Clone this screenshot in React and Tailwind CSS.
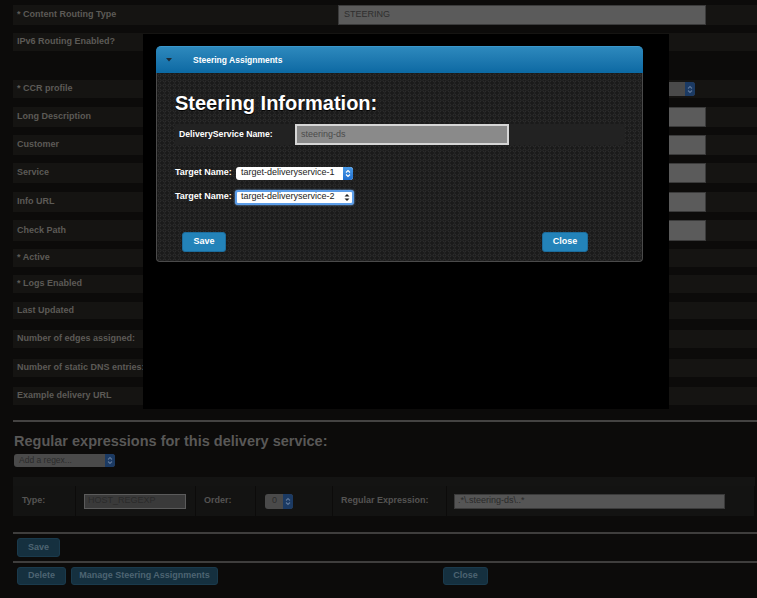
import React from "react";

const F = "font-['Liberation_Sans',Arial,Helvetica,sans-serif]";

function Stepper({ className = "" }) {
  return (
    <div className={`flex items-center justify-center rounded-r-[3px] bg-linear-to-b from-[#4a9be8] to-[#1f6fd0] ${className}`}>
      <svg width="6" height="9" viewBox="0 0 6 9">
        <path d="M1 3.5 L3 1.5 L5 3.5" fill="none" stroke="white" strokeWidth="1.1" />
        <path d="M1 5.5 L3 7.5 L5 5.5" fill="none" stroke="white" strokeWidth="1.1" />
      </svg>
    </div>
  );
}

function DimStepper({ className = "" }) {
  return (
    <div className={`flex items-center justify-center rounded-r-[3px] bg-[#1b3a63] ${className}`}>
      <svg width="6" height="9" viewBox="0 0 6 9">
        <path d="M1 3.5 L3 1.5 L5 3.5" fill="none" stroke="#5d7699" strokeWidth="1.1" />
        <path d="M1 5.5 L3 7.5 L5 5.5" fill="none" stroke="#5d7699" strokeWidth="1.1" />
      </svg>
    </div>
  );
}

const rows = [
  { label: "* Content Routing Type", cls: "mt-[5px] h-[20px]", input: "STEERING" },
  { label: "IPv6 Routing Enabled?", cls: "mt-[8px] h-[18px]", sel: true },
  { label: "* CCR profile", cls: "mt-[29px] h-[18px]", ccr: true },
  { label: "Long Description", cls: "mt-[9px] h-[20px]", input: "" },
  { label: "Customer", cls: "mt-[8px] h-[20px]", input: "" },
  { label: "Service", cls: "mt-[8px] h-[20px]", input: "" },
  { label: "Info URL", cls: "mt-[9px] h-[20px]", input: "" },
  { label: "Check Path", cls: "mt-[8px] h-[21px]", input: "" },
  { label: "* Active", cls: "mt-[8px] h-[18px]" },
  { label: "* Logs Enabled", cls: "mt-[8px] h-[18px]" },
  { label: "Last Updated", cls: "mt-[9px] h-[17px]" },
  { label: "Number of edges assigned:", cls: "mt-[11px] h-[18px]" },
  { label: "Number of static DNS entries:", cls: "mt-[11px] h-[18px]" },
  { label: "Example delivery URL", cls: "mt-[10px] h-[18px]" },
];

function DimButton({ children, className = "" }) {
  return (
    <div className={`flex items-center justify-center rounded-[3px] bg-[#15303f] border border-[#1a3a4c] text-[9px] font-bold text-[#4d6472] ${className}`}>
      {children}
    </div>
  );
}

export default function App() {
  return (
    <div className={`relative w-[757px] h-[598px] overflow-hidden bg-[#0c0b0a] ${F}`}>
      {/* Background form */}
      <div className="pl-[13px]">
        {rows.map((r, i) => (
          <div key={i} className={`flex items-center bg-[#151412] ${r.cls}`}>
            <div className="w-[325px] pl-[4px] text-[9px] font-bold text-[#5c5a56] whitespace-nowrap">{r.label}</div>
            {r.input !== undefined && (
              <div className="w-[368px] h-full bg-[#5b5b5b] border border-[#3b3b3b] flex items-center pl-[5px] text-[9px] text-[#2e2e2e]">
                {r.input}
              </div>
            )}
            {r.sel && (
              <div className="flex w-[38px] h-[15px] rounded-[3px] bg-[#4a4a4a]">
                <div className="flex-1" />
                <DimStepper className="w-[10px]" />
              </div>
            )}
            {r.ccr && (
              <div className="flex w-[357px] h-[14px] rounded-[3px] bg-[#4a4a4a]">
                <div className="flex-1" />
                <DimStepper className="w-[10px]" />
              </div>
            )}
          </div>
        ))}
      </div>

      {/* Lower section */}
      <div className="mt-[15px] ml-[13px] h-[2px] bg-[#444342]" />
      <div className="mt-[9px] pl-[14px] text-[14.5px] font-bold text-[#595857] leading-[20px]">
        Regular expressions for this delivery service:
      </div>
      <div className="mt-[3px] ml-[14px] flex w-[101px] h-[13px] rounded-[3px] bg-[#4a4a4a]">
        <div className="flex-1 flex items-center pl-[5px] text-[8.5px] text-[#2b2b2b]">Add a regex...</div>
        <DimStepper className="w-[10px]" />
      </div>
      <div className="mt-[10px] ml-[13px] w-[742px] bg-[#141413]">
        <div className="h-[9px]" />
        <div className="flex h-[30px] items-center text-[9px] font-bold text-[#555452]">
          <div className="w-[62px] h-full flex items-center pl-[9px] bg-[#131312]">Type:</div>
          <div className="w-[1px] h-full bg-[#0c0b0a]" />
          <div className="w-[119px] h-full flex items-center pl-[8px] bg-[#131312]">
            <div className="w-[102px] h-[15px] bg-[#3a3a3a] border border-[#5b5b5b] flex items-center pl-[3px] font-normal text-[#2a2a2a]">HOST_REGEXP</div>
          </div>
          <div className="w-[1px] h-full bg-[#0c0b0a]" />
          <div className="w-[59px] h-full flex items-center pl-[8px] bg-[#131312]">Order:</div>
          <div className="w-[1px] h-full bg-[#0c0b0a]" />
          <div className="w-[76px] h-full flex items-center pl-[9px] bg-[#131312]">
            <div className="flex w-[28px] h-[15px] rounded-[3px] bg-[#4a4a4a]">
              <div className="flex-1 flex items-center pl-[7px] font-normal text-[#2b2b2b]">0</div>
              <DimStepper className="w-[10px]" />
            </div>
          </div>
          <div className="w-[1px] h-full bg-[#0c0b0a]" />
          <div className="w-[113px] h-full flex items-center pl-[8px] bg-[#131312]">Regular Expression:</div>
          <div className="w-[1px] h-full bg-[#0c0b0a]" />
          <div className="w-[307px] h-full flex items-center pl-[7px] bg-[#131312]">
            <div className="w-[271px] h-[15px] bg-[#555] border border-[#3a3a3a] flex items-center pl-[3px] font-normal text-[#2a2a2a]">.*\.steering-ds\..*</div>
          </div>
          <div className="w-[1px] h-full bg-[#0c0b0a]" />
        </div>
      </div>
      <div className="mt-[16px] ml-[13px] h-[2px] bg-[#3f3e3d]" />
      <div className="mt-[4px] ml-[17px] flex">
        <DimButton className="w-[43px] h-[19px]">Save</DimButton>
      </div>
      <div className="mt-[4px] ml-[13px] h-[2px] bg-[#3f3e3d]" />
      <div className="mt-[4px] ml-[17px] flex gap-[5px]">
        <DimButton className="w-[49px] h-[18px]">Delete</DimButton>
        <DimButton className="w-[147px] h-[18px]">Manage Steering Assignments</DimButton>
        <DimButton className="ml-[220px] w-[45px] h-[18px]">Close</DimButton>
      </div>

      {/* Modal */}
      <div className="absolute left-[143px] top-[34px] w-[526px] h-[375px] bg-black pt-[12px] pl-[13px]">
        <div className="w-[487px]">
          <div className="h-[27px] rounded-t-[5px] bg-linear-to-b from-[#2d89bd] to-[#0b69a3] border-t border-[#3a97cc] flex items-center">
            <svg className="ml-[10px]" width="6" height="4" viewBox="0 0 6 4">
              <path d="M0 0 L6 0 L3 3.5 Z" fill="#1b2a36" />
            </svg>
            <span className="ml-[21px] text-[8.5px] font-bold text-white">Steering Assignments</span>
          </div>
          <div className="h-[189px] rounded-b-[4px] border border-t-0 border-[#4a4a4a] bg-[#1a1a1a] bg-[image:radial-gradient(circle,#1a1a1a_0.8px,#2b2b2b_1.3px,#2b2b2b_1.8px,#1a1a1a_2.3px)] bg-[length:5px_5px] pl-[18px] pr-[17px]">
            <div className="pt-[18px] text-[20px] font-bold text-white leading-[24px] [text-shadow:0_1px_1px_#000]">Steering Information:</div>
            <div className="mt-[9px] flex h-[21px] w-[450px] bg-[#222]">
              <div className="w-[120px] flex items-center pl-[4px] text-[8.7px] font-bold text-white">DeliveryService Name:</div>
              <div className="w-[214px] h-full bg-[#8a8a8a] border-2 border-[#d6d6d6] flex items-center pl-[4px] text-[9px] text-[#4a4a4a]">steering-ds</div>
            </div>
            <div className="mt-[21px] flex items-center h-[14px]">
              <span className="w-[61px] text-[9px] font-bold text-white">Target Name:</span>
              <div className="flex w-[117px] h-[13px] rounded-[3px] bg-white">
                <div className="flex-1 flex items-center pl-[5px] text-[9px] text-[#222]">target-deliveryservice-1</div>
                <Stepper className="w-[10px]" />
              </div>
            </div>
            <div className="mt-[9px] flex items-center h-[16px]">
              <span className="w-[60px] text-[9px] font-bold text-white">Target Name:</span>
              <div className="flex w-[119px] h-[15px] rounded-[3px] bg-white border-2 border-[#5d9ee9] shadow-[0_0_2px_#7fb5f5]">
                <div className="flex-1 flex items-center pl-[4px] text-[9px] text-[#222]">target-deliveryservice-2</div>
                <svg className="mr-[2px] self-center" width="6" height="9" viewBox="0 0 6 9">
                  <path d="M0.5 3.5 L3 1 L5.5 3.5 Z" fill="#222" />
                  <path d="M0.5 5.5 L3 8 L5.5 5.5 Z" fill="#222" />
                </svg>
              </div>
            </div>
            <div className="mt-[27px] flex justify-between pl-[7px] pr-[37px]">
              <div className="w-[44px] h-[20px] rounded-[3px] bg-[#2383b9] border border-[#1c6c9c] flex items-center justify-center text-[9px] font-bold text-white">Save</div>
              <div className="w-[46px] h-[20px] rounded-[3px] bg-[#2383b9] border border-[#1c6c9c] flex items-center justify-center text-[9px] font-bold text-white">Close</div>
            </div>
          </div>
        </div>
      </div>
    </div>
  );
}
